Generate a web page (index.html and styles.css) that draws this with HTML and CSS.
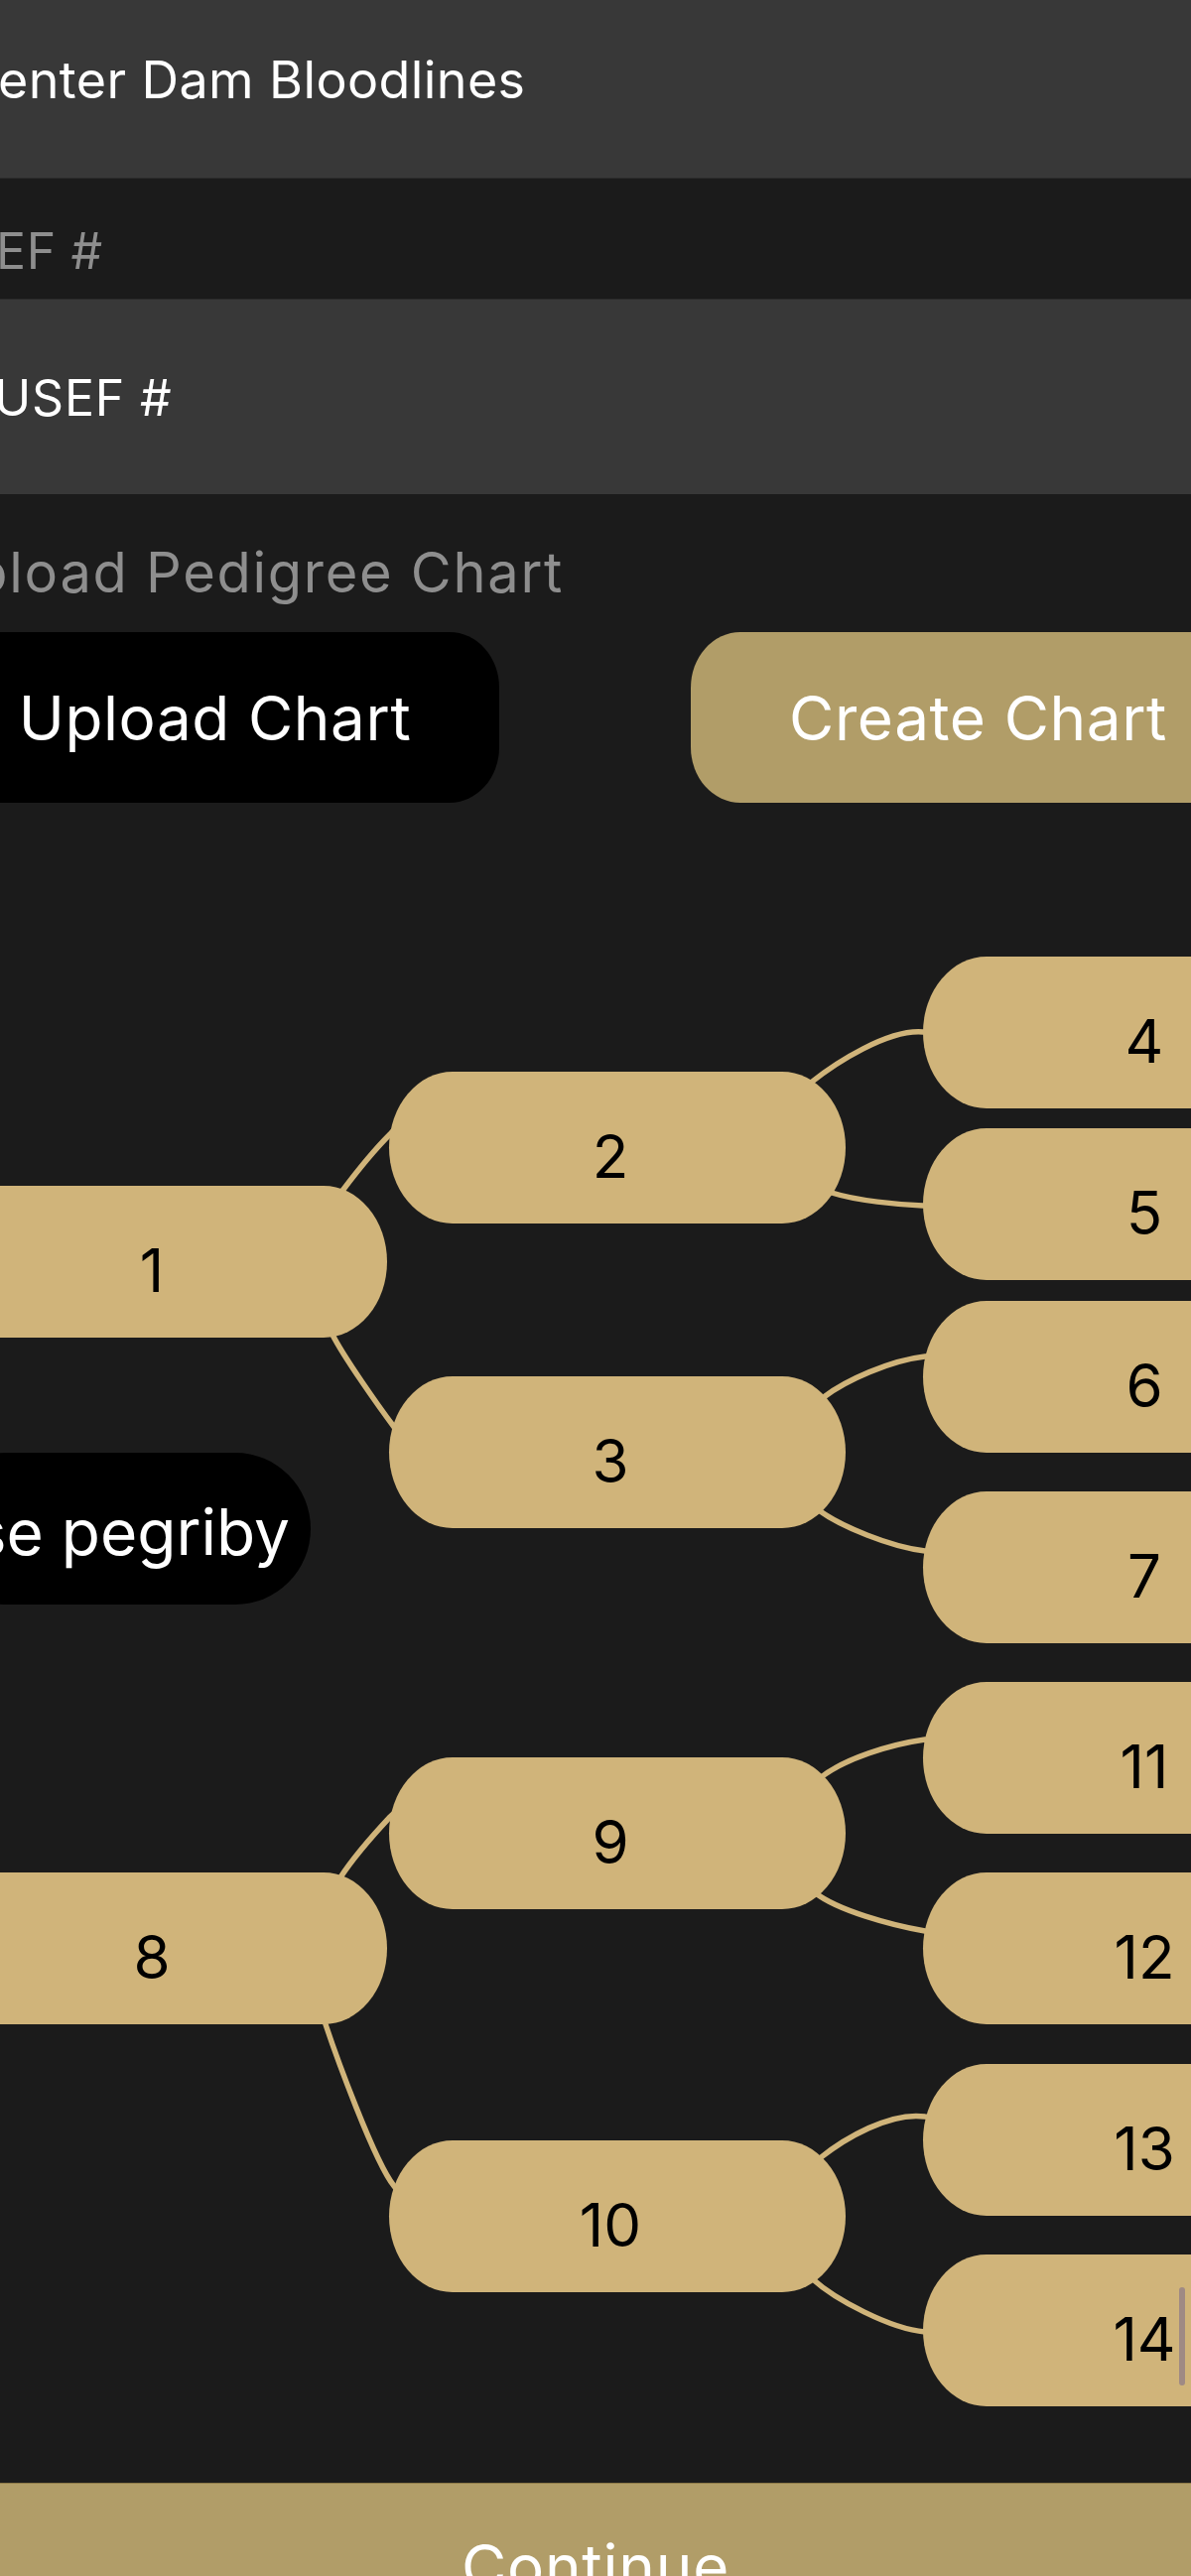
FILE: index.html
```html
<!DOCTYPE html>
<html lang="en">
<head>
<meta charset="utf-8">
<title>Dam Bloodlines</title>
<link rel="stylesheet" href="styles.css">
</head>
<body>
<main class="screen">
  <div class="field field-top"><span class="dam-text">enter Dam Bloodlines</span></div>
  <div class="label label-usef"><span class="usef-label">EF #</span></div>
  <div class="field field-usef"><span class="usef-text">USEF #</span></div>
  <div class="label label-upload"><span class="upload-label">Upload Pedigree Chart</span></div>
  <div class="btn-row">
    <button class="btn btn-upload">Upload Chart</button>
    <button class="btn btn-create">Create Chart</button>
  </div>
  <section class="tree">
    <svg class="links" width="1200" height="1693" viewBox="0 0 1200 1693">
      <g transform="translate(0,-809)" fill="none" stroke="#d0b47a" stroke-width="5.5" stroke-linecap="round">
        <path d="M333 1216 L345 1200 C360 1180 377 1159 393 1143 L407 1127"/>
        <path d="M326 1327 L335 1345 C346 1367 382 1418 397 1438 L412 1458"/>
        <path d="M805 1101 L817 1091 C842 1071 895 1037 930 1040 L950 1041"/>
        <path d="M823 1197 L838 1202 C863 1210 905 1214 930 1215 L950 1215"/>
        <path d="M818 1417 L830 1408 C852 1391 897 1371 932 1367 L952 1366"/>
        <path d="M813 1513 L825 1522 C847 1538 897 1559 932 1563 L952 1565"/>
        <path d="M334 1906 L343 1892 C356 1872 379 1846 393 1831 L408 1817"/>
        <path d="M323 2025 L328 2040 C338 2070 377 2178 397 2203 L411 2221"/>
        <path d="M814 1802 L826 1792 C851 1772 897 1758 932 1753 L952 1755"/>
        <path d="M810 1899 L822 1908 C844 1925 897 1940 932 1946 L952 1949"/>
        <path d="M814 2185 L826 2175 C851 2155 897 2128 932 2133 L952 2135"/>
        <path d="M807 2286 L819 2297 C841 2317 897 2347 932 2350 L952 2350"/>
      </g>
    </svg>
    <div class="node col1 n1">1</div>
    <div class="node col2 n2">2</div>
    <div class="node col2 n3">3</div>
    <div class="node col3 n4">4</div>
    <div class="node col3 n5">5</div>
    <div class="node col3 n6">6</div>
    <div class="node col3 n7">7</div>
    <div class="pill">se pegriby</div>
    <div class="node col1 n8">8</div>
    <div class="node col2 n9">9</div>
    <div class="node col2 n10">10</div>
    <div class="node col3 n11">11</div>
    <div class="node col3 n12">12</div>
    <div class="node col3 n13">13</div>
    <div class="node col3 n14">14<span class="caret"></span></div>
  </section>
  <footer class="continue">Continue</footer>
</main>
</body>
</html>
```
FILE: styles.css
```css
html, body {
  margin: 0;
  padding: 0;
}
body {
  width: 1200px;
  height: 2596px;
  overflow: hidden;
  background: #1b1b1b;
  font-family: Inter, "Noto Sans", "Liberation Sans", sans-serif;
  color: #fff;
}
.screen {
  display: flex;
  flex-direction: column;
  width: 1200px;
  height: 2596px;
  overflow: hidden;
}
.field {
  background: #383838;
  box-sizing: border-box;
  white-space: nowrap;
  color: #fff;
}
.field-top {
  height: 180px;
  padding-top: 49px;
  font-size: 52px;
  letter-spacing: 0.4px;
  border-bottom: 1px solid #2c2c2c;
}
.dam-text {
  display: inline-block;
  margin-left: -2px;
}
.label {
  box-sizing: border-box;
  color: #8e8e8e;
  white-space: nowrap;
}
.label-usef {
  height: 122px;
  padding-top: 43px;
  font-size: 50px;
  letter-spacing: 0.6px;
  border-bottom: 1px solid #2c2c2c;
}
.usef-label {
  display: inline-block;
  margin-left: -4px;
}
.field-usef {
  height: 196px;
  padding-top: 69px;
  font-size: 50px;
  letter-spacing: 0.8px;
}
.usef-text {
  display: inline-block;
  margin-left: -6px;
}
.label-upload {
  height: 139px;
  padding-top: 45px;
  font-size: 56px;
  letter-spacing: 1.7px;
}
.upload-label {
  display: inline-block;
  margin-left: -70px;
}
.btn-row {
  display: flex;
  gap: 193px;
  height: 172px;
  margin-left: -70px;
  width: 1345px;
}
.btn {
  border: 0;
  padding: 0;
  height: 172px;
  width: 573px;
  border-radius: 50px / 56px;
  font-family: inherit;
  font-size: 62px;
  letter-spacing: 0.6px;
  color: #fff;
  display: flex;
  align-items: center;
  justify-content: center;
}
.btn-upload {
  background: #000;
}
.btn-create {
  background: #b19d68;
  width: 579px;
}
.tree {
  position: relative;
  height: 1693px;
  flex: none;
}
.links {
  position: absolute;
  left: 0;
  top: 0;
}
.node {
  position: absolute;
  box-sizing: border-box;
  width: 460px;
  height: 153px;
  border-radius: 64px / 76.5px;
  background: #d0b47a;
  color: #000;
  font-size: 60px;
  display: flex;
  align-items: center;
  justify-content: center;
  padding: 16px 14px 0 0;
}
.col1 { left: -70px; }
.col2 { left: 392px; }
.col3 { left: 930px; }
.n4 { top: 155px; }
.n2 { top: 271px; }
.n5 { top: 328px; }
.n1 { top: 386px; }
.n6 { top: 502px; }
.n3 { top: 578px; }
.n7 { top: 694px; }
.n11 { top: 886px; }
.n9 { top: 962px; }
.n8 { top: 1078px; }
.n12 { top: 1078px; }
.n13 { top: 1271px; }
.n10 { top: 1348px; }
.n14 { top: 1463px; }
.pill {
  position: absolute;
  left: -70px;
  top: 655px;
  width: 383px;
  height: 153px;
  box-sizing: border-box;
  border-radius: 76px / 76.5px;
  background: #000;
  color: #fff;
  font-size: 64px;
  display: flex;
  align-items: center;
  justify-content: flex-end;
  padding: 6px 21px 0 0;
  white-space: nowrap;
  overflow: hidden;
}
.caret {
  position: absolute;
  left: 258px;
  top: 33px;
  width: 6px;
  height: 99px;
  border-radius: 3px;
  background: #9f8a84;
}
.continue {
  flex: none;
  box-sizing: border-box;
  height: 94px;
  background: #b19d68;
  border-top: 1px solid #8d7a48;
  color: #fff;
  font-size: 62px;
  letter-spacing: 0.8px;
  text-align: center;
  padding-top: 46px;
  line-height: normal;
  overflow: hidden;
}
```
